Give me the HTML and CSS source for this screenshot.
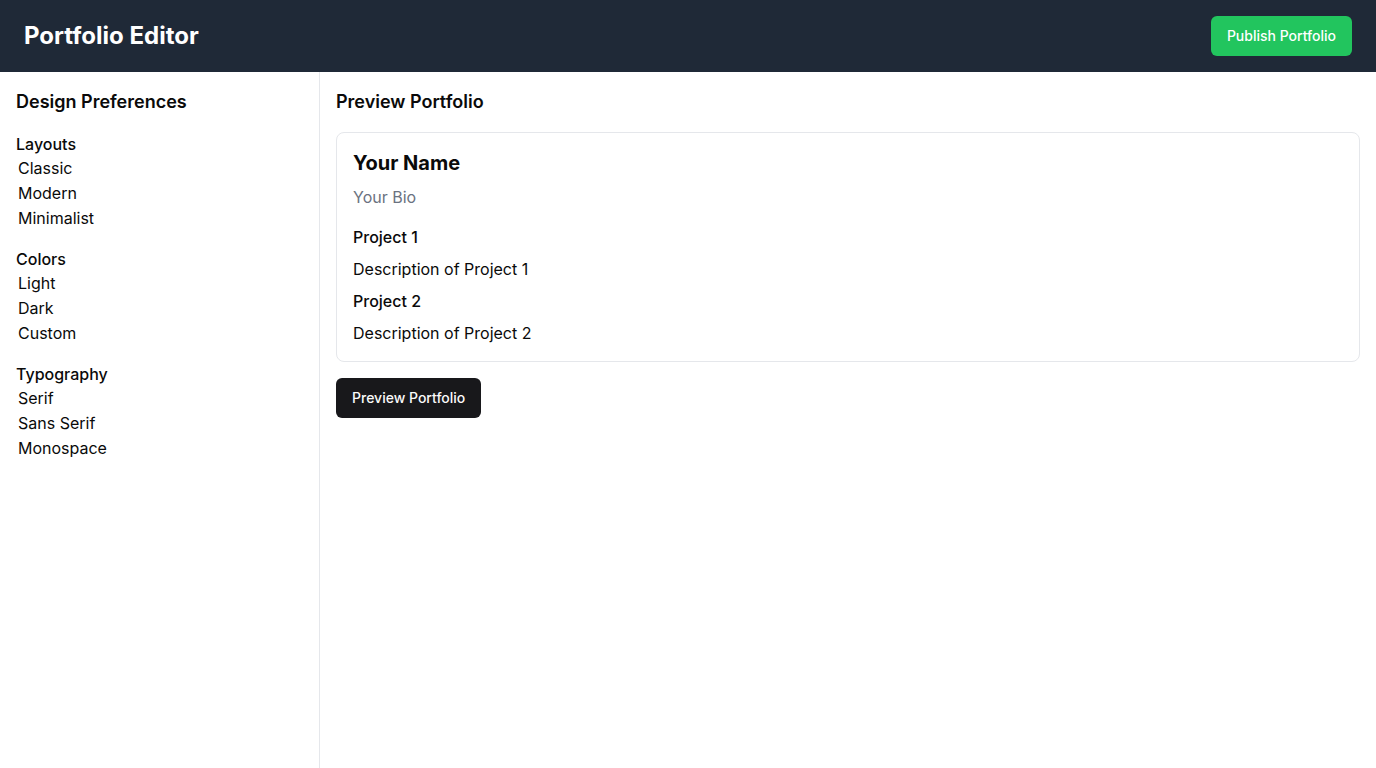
FILE: index.html
```html
<!DOCTYPE html>
<html lang="en">
<head>
<meta charset="utf-8">
<title>Portfolio Editor</title>
<link rel="stylesheet" href="styles.css">
</head>
<body>
<header class="topbar">
  <h1 class="brand">Portfolio Editor</h1>
  <button class="btn btn-publish">Publish Portfolio</button>
</header>
<div class="layout">
  <aside class="sidebar">
    <h2 class="section-title">Design Preferences</h2>
    <div class="group">
      <h3 class="group-title">Layouts</h3>
      <div class="option">Classic</div>
      <div class="option">Modern</div>
      <div class="option">Minimalist</div>
    </div>
    <div class="group">
      <h3 class="group-title">Colors</h3>
      <div class="option">Light</div>
      <div class="option">Dark</div>
      <div class="option">Custom</div>
    </div>
    <div class="group">
      <h3 class="group-title">Typography</h3>
      <div class="option">Serif</div>
      <div class="option">Sans Serif</div>
      <div class="option">Monospace</div>
    </div>
  </aside>
  <main class="main">
    <h2 class="section-title">Preview Portfolio</h2>
    <div class="card">
      <div class="name">Your Name</div>
      <div class="bio">Your Bio</div>
      <div class="project-title">Project 1</div>
      <div class="project-desc">Description of Project 1</div>
      <div class="project-title">Project 2</div>
      <div class="project-desc">Description of Project 2</div>
    </div>
    <button class="btn btn-dark">Preview Portfolio</button>
  </main>
</div>
</body>
</html>
```
FILE: styles.css
```css
* { box-sizing: border-box; }
html, body { margin: 0; padding: 0; height: 100%; }
body {
  font-family: Inter, "Noto Sans", sans-serif;
  color: #0a0a0a;
  background: #ffffff;
  display: flex;
  flex-direction: column;
}
.topbar {
  height: 72px;
  flex: none;
  background: #1f2937;
  display: flex;
  align-items: center;
  justify-content: space-between;
  padding: 0 24px;
}
.brand {
  margin: 0;
  font-size: 24px;
  line-height: 32px;
  font-weight: 700;
  color: #ffffff;
}
.btn {
  font-family: inherit;
  border: none;
  height: 40px;
  padding: 0 16px;
  border-radius: 6px;
  font-size: 14px;
  line-height: 20px;
  font-weight: 500;
  color: #ffffff;
  cursor: pointer;
}
.btn-publish { background: #22c55e; }
.btn-dark { background: #18181b; color: #fafafa; }
.layout {
  flex: 1;
  display: flex;
  min-height: 0;
}
.sidebar {
  width: 320px;
  flex: none;
  border-right: 1px solid #e5e7eb;
  padding: 16px;
}
.section-title {
  margin: 0 0 16px;
  font-size: 18px;
  line-height: 28px;
  font-weight: 600;
}
.group { margin-bottom: 16px; }
.group-title {
  margin: 0;
  font-size: 16px;
  line-height: 24px;
  font-weight: 500;
}
.option {
  font-size: 16px;
  line-height: 25px;
  padding: 0 2px;
}
.main {
  flex: 1;
  padding: 16px;
  display: flex;
  flex-direction: column;
  align-items: flex-start;
}
.card {
  align-self: stretch;
  border: 1px solid #e5e7eb;
  border-radius: 8px;
  padding: 16px;
  margin-bottom: 16px;
}
.name {
  font-size: 20px;
  line-height: 28px;
  font-weight: 700;
}
.bio {
  margin-top: 8px;
  font-size: 16px;
  line-height: 24px;
  color: #6b7280;
}
.project-title {
  margin-top: 16px;
  font-size: 16px;
  line-height: 24px;
  font-weight: 500;
}
.project-desc + .project-title { margin-top: 8px; }
.project-desc {
  margin-top: 8px;
  font-size: 16px;
  line-height: 24px;
}
```
